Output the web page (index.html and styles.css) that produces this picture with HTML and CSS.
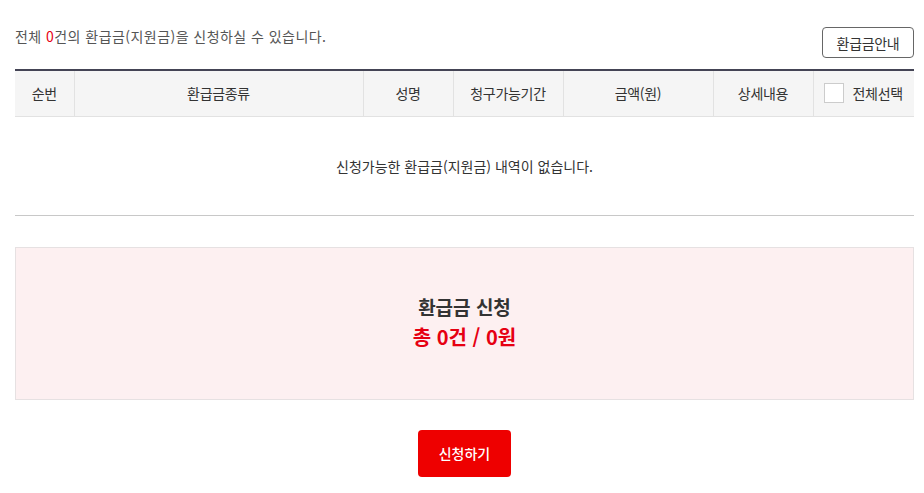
FILE: index.html
```html
<!DOCTYPE html>
<html lang="ko">
<head>
<meta charset="utf-8">
<link rel="stylesheet" href="styles.css">
</head>
<body>
<div class="wrap">
  <div class="top">
    <p class="count">전체 <span class="red">0</span>건의 환급금(지원금)을 신청하실 수 있습니다.</p>
    <button class="guide">환급금안내</button>
  </div>
  <table class="list">
    <thead>
      <tr>
        <th class="c1">순번</th>
        <th class="c2">환급금종류</th>
        <th class="c3">성명</th>
        <th class="c4">청구가능기간</th>
        <th class="c5">금액(원)</th>
        <th class="c6">상세내용</th>
        <th class="c7"><span class="chk-wrap"><span class="chk"></span>전체선택</span></th>
      </tr>
    </thead>
    <tbody>
      <tr><td class="empty" colspan="7">신청가능한 환급금(지원금) 내역이 없습니다.</td></tr>
    </tbody>
  </table>
  <div class="summary">
    <div class="sum-title">환급금 신청</div>
    <div class="sum-total">총 0건 / 0원</div>
  </div>
  <div class="actions">
    <button class="apply">신청하기</button>
  </div>
</div>
</body>
</html>
```

FILE: styles.css
```css
* { box-sizing: border-box; }
body {
  margin: 0;
  font-family: "Noto Sans CJK KR", "Noto Sans", sans-serif;
  color: #333;
  background: #fff;
}
.wrap {
  padding: 27px 10px 0 15px;
}
.top {
  display: flex;
  justify-content: space-between;
  align-items: flex-start;
  height: 31px;
}
.count {
  margin: -1px 0 0;
  font-size: 14px;
  line-height: 20px;
  color: #555;
  letter-spacing: 0.45px;
}
.red { color: #e60012; }
.guide {
  width: 92px;
  height: 31px;
  border: 1px solid #666;
  border-radius: 4px;
  background: #fff;
  font-family: inherit;
  font-size: 14px;
  color: #333;
  padding: 0;
  letter-spacing: -0.3px;
}
.list {
  width: 100%;
  margin-top: 11px;
  border-collapse: collapse;
  border-top: 2px solid #444455;
  table-layout: fixed;
}
.list th {
  height: 46px;
  background: #f5f5f5;
  font-weight: normal;
  font-size: 14px;
  color: #333;
  border-left: 1px solid #e2e2e2;
  border-bottom: 1px solid #e2e2e2;
  padding: 0;
  letter-spacing: -0.3px;
}
.list th:first-child { border-left: none; }
.c1 { width: 59px; }
.c2 { width: 289px; }
.c3 { width: 90px; }
.c4 { width: 110px; }
.c5 { width: 150px; }
.c6 { width: 100px; }
.c7 { width: 101px; }
.chk-wrap {
  display: flex;
  align-items: center;
  gap: 9px;
  padding-left: 10px;
}
.chk {
  width: 20px;
  height: 20px;
  border: 1px solid #ccc;
  background: #fff;
}
.empty {
  height: 99px;
  text-align: center;
  font-size: 14px;
  color: #333;
  border-bottom: 1px solid #c8c8c8;
  padding: 0;
  letter-spacing: 0;
}
.summary {
  margin-top: 31px;
  height: 153px;
  background: #fdf0f1;
  border: 1px solid #e6e1e2;
  display: flex;
  flex-direction: column;
  align-items: center;
  justify-content: center;
  padding-bottom: 3px;
}
.sum-title {
  font-size: 19px;
  font-weight: bold;
  color: #333;
  line-height: 30px;
}
.sum-total {
  font-size: 20px;
  font-weight: bold;
  color: #e60012;
  line-height: 30px;
}
.actions {
  display: flex;
  justify-content: center;
  margin-top: 30px;
}
.apply {
  width: 93px;
  height: 47px;
  background: #ee0000;
  border: none;
  border-radius: 4px;
  color: #fff;
  font-family: inherit;
  font-size: 14px;
  font-weight: 500;
  padding: 0;
}
```
